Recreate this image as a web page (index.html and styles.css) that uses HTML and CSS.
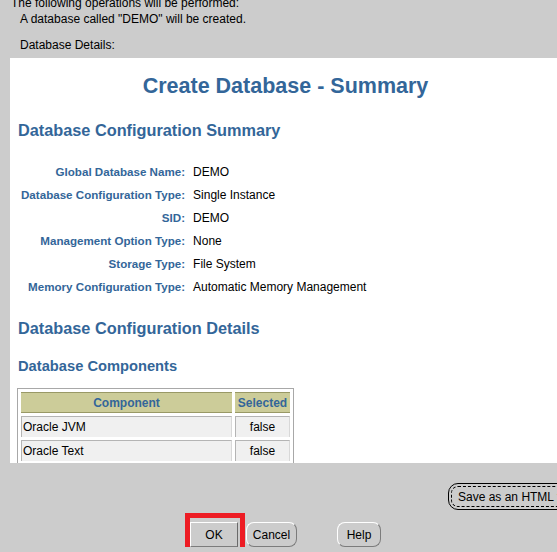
FILE: index.html
```html
<!DOCTYPE html>
<html>
<head>
    <title>Create Database - Summary</title>
    <meta charset="UTF-8">
    <link rel="stylesheet" href="styles.css">
</head>
<body>
    <div class="dialog">
        <div class="intro">
            <p class="intro-lead">The following operations will be performed:</p>
            <p class="intro-item">A database called "DEMO" will be created.</p>
            <p class="intro-details">Database Details:</p>
        </div>

        <div class="summary">
            <h1>Create Database - Summary</h1>

            <h2>Database Configuration Summary</h2>
            <div class="props">
                <span class="prop-label">Global Database Name:</span>
                <span class="prop-value">DEMO</span>
                <span class="prop-label">Database Configuration Type:</span>
                <span class="prop-value">Single Instance</span>
                <span class="prop-label">SID:</span>
                <span class="prop-value">DEMO</span>
                <span class="prop-label">Management Option Type:</span>
                <span class="prop-value">None</span>
                <span class="prop-label">Storage Type:</span>
                <span class="prop-value">File System</span>
                <span class="prop-label">Memory Configuration Type:</span>
                <span class="prop-value">Automatic Memory Management</span>
            </div>

            <h2>Database Configuration Details</h2>
            <h3>Database Components</h3>
            <table class="components">
                <colgroup>
                    <col class="col-name">
                    <col class="col-selected">
                </colgroup>
                <thead>
                    <tr><th>Component</th><th>Selected</th></tr>
                </thead>
                <tbody>
                    <tr><td>Oracle JVM</td><td class="center">false</td></tr>
                    <tr><td>Oracle Text</td><td class="center">false</td></tr>
                    <tr><td>Oracle XML DB</td><td class="center">true</td></tr>
                    <tr><td>Oracle Multimedia</td><td class="center">false</td></tr>
                </tbody>
            </table>
        </div>

        <div class="save-row">
            <button class="btn btn-save">Save as an HTML file...</button>
        </div>

        <div class="actions">
            <span class="focus-mark"><button class="btn btn-ok">OK</button></span>
            <button class="btn btn-cancel">Cancel</button>
            <button class="btn btn-help">Help</button>
        </div>
    </div>
</body>
</html>
```

FILE: styles.css
```css
* {
    box-sizing: border-box;
    margin: 0;
    padding: 0;
}

html, body {
    overflow: hidden;
}

body {
    font-family: 'Liberation Sans', Arial, sans-serif;
    font-size: 12px;
    background: #cccccc;
    color: #000;
}

.dialog {
    width: 571px;
}

/* text above the white panel */
.intro {
    margin-top: -5px;
    line-height: 16px;
}

.intro-lead {
    padding-left: 11px;
}

.intro-item {
    padding-left: 20px;
}

.intro-details {
    padding-left: 20px;
    margin-top: 10px;
}

/* white summary panel */
.summary {
    margin: 5px 10px 0;
    height: 405px;
    overflow: hidden;
    background: #fff;
    padding: 15px 8px 0;
}

.summary h1 {
    font-size: 21.5px;
    line-height: 26px;
    color: #336699;
    text-align: center;
}

.summary h2 {
    font-size: 16.3px;
    line-height: 20px;
    color: #336699;
    margin-top: 20px;
}

.summary h1 + h2 {
    margin-top: 21px;
}

.summary h3 {
    font-size: 14.7px;
    line-height: 18px;
    color: #336699;
    margin-top: 19px;
}

.props {
    display: grid;
    grid-template-columns: max-content auto;
    grid-auto-rows: 23px;
    column-gap: 8px;
    align-items: center;
    margin: 20px 0 0 3px;
}

.prop-label {
    font-size: 11.6px;
    font-weight: bold;
    color: #336699;
    text-align: right;
    white-space: nowrap;
}

.prop-value {
    white-space: nowrap;
}

/* components table */
.components {
    margin: 13px 0 0 -1px;
    border: 1px solid #a8a8a8;
    border-spacing: 3px;
    table-layout: fixed;
    width: 277px;
}

.col-name {
    width: 211px;
}

.col-selected {
    width: 55px;
}

.components th {
    height: 21px;
    background: #cccc99;
    border-top: 1px solid #999966;
    border-bottom: 1px solid #999966;
    color: #336699;
    font-weight: bold;
    text-align: center;
    white-space: nowrap;
}

.components td {
    height: 21px;
    background: #f0f0f0;
    border-top: 1px solid #b4b4b4;
    border-left: 1px solid #b4b4b4;
    border-right: 1px solid #d8d8d8;
    padding-left: 1px;
    white-space: nowrap;
}

.components td.center {
    text-align: center;
    padding-left: 0;
}

/* buttons */
.save-row {
    display: flex;
    justify-content: flex-end;
    margin-top: 20px;
}

.btn {
    font-family: 'Liberation Sans', Arial, sans-serif;
    font-size: 12px;
    color: #000;
    background: #cccccc;
    height: 25px;
    border: 1px solid;
    border-color: #ffffff #7c7c7c #7c7c7c #ffffff;
    border-radius: 8px;
    cursor: pointer;
    white-space: nowrap;
    overflow: hidden;
}

.btn-save {
    width: 123px;
    height: 27px;
    text-align: left;
    padding-left: 9px;
    border-color: #000;
    border-radius: 10px;
    outline: 1px dashed #000;
    outline-offset: -4px;
}

.actions {
    display: flex;
    justify-content: center;
    margin-top: 12px;
}

.btn-ok {
    width: 48px;
    border-radius: 0;
    border-right-color: #6a6a6a;
}

.btn-cancel {
    width: 51px;
    margin-left: 8px;
}

.btn-help {
    width: 44px;
    margin-left: 40px;
}

/* red highlight drawn over the OK button */
.focus-mark {
    position: relative;
    display: flex;
}

.focus-mark::after {
    content: '';
    position: absolute;
    left: -5px;
    right: -7px;
    top: -9px;
    bottom: -5px;
    border: 5px solid #ed1c24;
}
```
